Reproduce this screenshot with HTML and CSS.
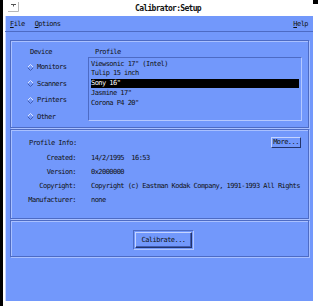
FILE: index.html
```html
<!DOCTYPE html>
<html lang="en">
  <head>
    <meta charset="utf-8" />
    <title>Calibrator:Setup</title>
    <link rel="stylesheet" href="styles.css">
  </head>
  <body>
    <div class="window">
      <div class="titlebar">
        <span class="winmenu">
          <svg width="11" height="10" viewBox="0 0 11 10">
            <path d="M10.5 0v9.5H0" fill="none" stroke="#b8b8b8" />
            <path d="M3 2.5h5M5.5 2.5v2" fill="none" stroke="#555" />
          </svg>
        </span>
        <span class="title">Calibrator:Setup</span>
      </div>

      <div class="client">
        <div class="menubar">
          <span><u>F</u>ile</span>
          <span><u>O</u>ptions</span>
          <span class="help"><u>H</u>elp</span>
        </div>

        <div class="content">
          <section class="panel devices">
            <div class="head device-head">Device</div>
            <div class="head profile-head">Profile</div>
            <div class="radios">
              <div class="radio"><svg class="diamond" viewBox="0 0 7 7"><path d="M0.5 3.5L3.5 0.5L6.5 3.5" /><path d="M0.5 3.5L3.5 6.5L6.5 3.5" /></svg>Monitors</div>
              <div class="radio"><svg class="diamond" viewBox="0 0 7 7"><path d="M0.5 3.5L3.5 0.5L6.5 3.5" /><path d="M0.5 3.5L3.5 6.5L6.5 3.5" /></svg>Scanners</div>
              <div class="radio"><svg class="diamond" viewBox="0 0 7 7"><path d="M0.5 3.5L3.5 0.5L6.5 3.5" /><path d="M0.5 3.5L3.5 6.5L6.5 3.5" /></svg>Printers</div>
              <div class="radio"><svg class="diamond" viewBox="0 0 7 7"><path d="M0.5 3.5L3.5 0.5L6.5 3.5" /><path d="M0.5 3.5L3.5 6.5L6.5 3.5" /></svg>Other</div>
            </div>
            <div class="listbox">
              <div class="item">Viewsonic 17" (Intel)</div>
              <div class="item">Tulip 15 inch</div>
              <div class="item selected">Sony 16"</div>
              <div class="item">Jasmine 17"</div>
              <div class="item">Corona P4 20"</div>
            </div>
          </section>

          <section class="panel info">
            <div class="info-head">
              <span>Profile Info:</span>
              <button type="button" class="btn more">More...</button>
            </div>
            <div class="fields">
              <span class="label">Created:</span><span>14/2/1995&nbsp; 16:53</span>
              <span class="label">Version:</span><span>0x2000000</span>
              <span class="label">Copyright:</span><span>Copyright (c) Eastman Kodak Company, 1991-1993 All Rights</span>
              <span class="label">Manufacturer:</span><span>none</span>
            </div>
          </section>

          <section class="panel actions">
            <div class="default-ring">
              <button type="button" class="btn calibrate">Calibrate...</button>
            </div>
          </section>
        </div>
      </div>
    </div>
  </body>
</html>
```

FILE: styles.css
```css
html {
  font-family: "DejaVu Sans Mono", "Liberation Mono", monospace;
  font-size: 7px;
  letter-spacing: -0.55px;
  color: #111;
}

body {
  margin: 0;
  background-color: #fff;
  overflow: hidden;
}

.window {
  position: relative;
  box-sizing: border-box;
  width: 318px;
  height: 306px;
  display: flex;
  flex-direction: column;
  border-left: 3px solid #000;
  padding: 0 5px 5px 2px;
}

.window::after {
  content: "";
  position: absolute;
  top: 0;
  right: 0;
  width: 5px;
  height: 4px;
  background-color: #000;
}

.titlebar {
  height: 16px;
  display: flex;
  align-items: center;
}

.winmenu {
  display: flex;
  margin-left: 3px;
  margin-top: -2px;
}

.title {
  flex: 1;
  padding-left: 4px;
  text-align: center;
  font-size: 8px;
  font-weight: bold;
  letter-spacing: -0.7px;
}

.client {
  flex: 1;
  display: flex;
  flex-direction: column;
  background-color: #7298fb;
  box-shadow: inset 1px 0 0 #c9d6ff;
}

.menubar {
  height: 15px;
  display: flex;
  align-items: center;
  gap: 10px;
  padding: 0 5px;
  border-bottom: 1px solid #4d6bc4;
}

.menubar u {
  text-underline-offset: 1px;
}

.menubar .help {
  margin-left: auto;
}

.content {
  padding: 8px 4px 0 5px;
  display: flex;
  flex-direction: column;
  gap: 1px;
}

.panel {
  box-sizing: border-box;
  border: 1px solid #4d6bc4;
  box-shadow: inset 1px 1px 0 #a9c0ff, 1px 1px 0 #a9c0ff;
}

/* device / profile */

.devices {
  height: 88px;
  display: grid;
  grid-template-columns: 61px 1fr;
  grid-template-rows: 9px auto;
  padding: 7px 6px 0 16px;
}

.head {
  line-height: 9px;
}

.device-head {
  margin-left: 3px;
}

.profile-head {
  margin-left: 7px;
}

.radios {
  margin-top: 2px;
}

.radio {
  height: 16.5px;
  display: flex;
  align-items: center;
  gap: 3px;
}

.diamond {
  width: 7px;
  height: 7px;
  fill: none;
}

.diamond path:first-child {
  stroke: #dfe7ff;
}

.diamond path:last-child {
  stroke: #3f5cb3;
}

.listbox {
  height: 64px;
  box-sizing: border-box;
  padding: 1.5px 2px;
  border: 1px solid;
  border-color: #4d6bc4 #b4c8ff #b4c8ff #4d6bc4;
}

.item {
  height: 8.5px;
  line-height: 8.5px;
  margin-bottom: 1.3px;
  white-space: nowrap;
}

.item.selected {
  background-color: #000;
  color: #fff;
}

/* profile info */

.info {
  height: 90px;
  padding: 7px 7px 0 18px;
}

.info-head {
  display: flex;
  justify-content: space-between;
  align-items: center;
}

.btn {
  margin: 0;
  padding: 0;
  font: inherit;
  letter-spacing: inherit;
  color: inherit;
  background-color: #7298fb;
  border: 1px solid;
  border-color: #c5d4ff #23336a #23336a #c5d4ff;
  border-radius: 0;
}

.more {
  width: 30px;
  height: 11px;
  line-height: 9px;
}

.fields {
  margin-top: 3px;
  margin-left: -18px;
  display: grid;
  grid-template-columns: 65px 1fr;
  grid-auto-rows: 14px;
  column-gap: 15px;
  align-items: center;
}

.fields span {
  white-space: nowrap;
  overflow: hidden;
}

.fields .label {
  text-align: right;
}

/* calibrate */

.actions {
  height: 37px;
  display: flex;
  justify-content: center;
  align-items: flex-start;
  padding: 9px 0 0 8px;
}

.default-ring {
  display: flex;
  padding: 1px;
  border: 1px solid;
  border-color: #4d6bc4 #b4c8ff #b4c8ff #4d6bc4;
}

.calibrate {
  width: 57px;
  height: 16px;
  box-shadow: inset -1px -1px 0 #3f5cb3;
}
```
